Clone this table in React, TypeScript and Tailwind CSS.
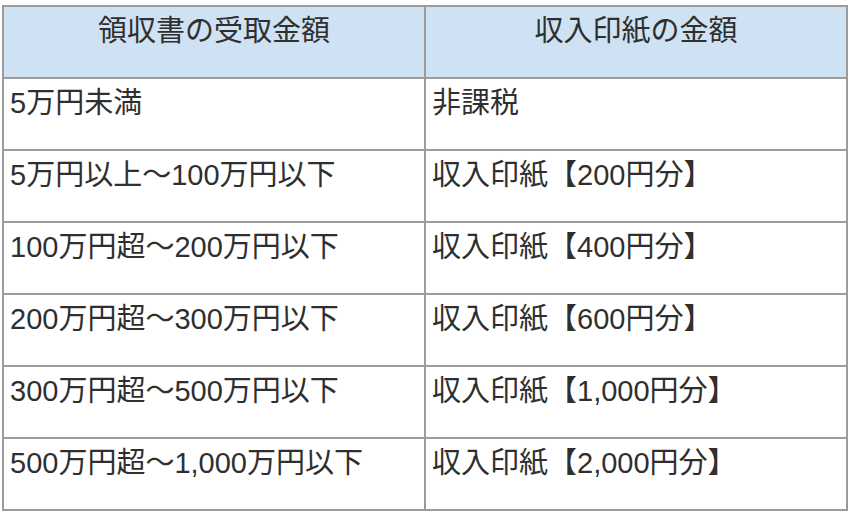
import React from 'react';

const rows = [
  ['5万円未満', '非課税'],
  ['5万円以上〜100万円以下', '収入印紙【200円分】'],
  ['100万円超〜200万円以下', '収入印紙【400円分】'],
  ['200万円超〜300万円以下', '収入印紙【600円分】'],
  ['300万円超〜500万円以下', '収入印紙【1,000円分】'],
  ['500万円超〜1,000万円以下', '収入印紙【2,000円分】'],
];

const App = () => {
  return (
    <div
      className="w-[852px] h-[516px] bg-white pl-[2px] pt-[5px] text-[#2f2f2f]"
      style={{ fontFamily: '"Liberation Sans", "Noto Sans CJK JP", sans-serif' }}
    >
      <table className="w-[846px] border-collapse border-2 border-[#9b9b9b] table-fixed">
        <thead>
          <tr className="h-[72px] bg-[#cfe2f3]">
            <th className="w-1/2 border-2 border-[#9b9b9b] align-top pt-[4px] text-[29px] leading-[40px] font-normal text-center">
              領収書の受取金額
            </th>
            <th className="w-1/2 border-2 border-[#9b9b9b] align-top pt-[4px] text-[29px] leading-[40px] font-normal text-center">
              収入印紙の金額
            </th>
          </tr>
        </thead>
        <tbody>
          {rows.map(([a, b], i) => (
            <tr key={i} className="h-[72px]">
              <td className="border-2 border-[#9b9b9b] align-top pt-[4px] pl-[6px] text-[29px] leading-[40px]">
                {a}
              </td>
              <td className="border-2 border-[#9b9b9b] align-top pt-[4px] pl-[6px] text-[29px] leading-[40px]">
                {b}
              </td>
            </tr>
          ))}
        </tbody>
      </table>
    </div>
  );
};

export default App;
